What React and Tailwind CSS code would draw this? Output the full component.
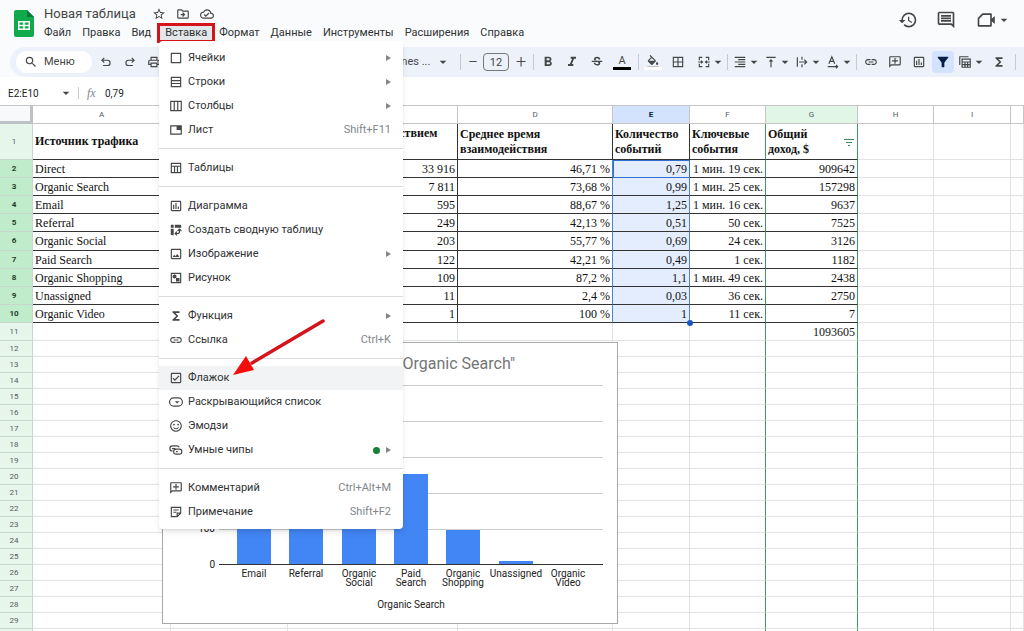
import React from 'react';
import {
  MdArrowDropDown,
  MdBorderAll,
  MdFilterAlt,
  MdFormatAlignRight,
  MdFormatBold,
  MdFormatColorFill,
  MdFormatItalic,
  MdFunctions,
  MdHistory,
  MdLink,
  MdOutlineAddComment,
  MdOutlineCloudDone,
  MdOutlineComment,
  MdOutlineDriveFileMove,
  MdOutlineInsertChart,
  MdOutlineLocalPrintshop,
  MdOutlinePhoto,
  MdOutlinePivotTableChart,
  MdOutlineCheckBox,
  MdOutlineSentimentSatisfied,
  MdSearch,
  MdStarBorder,
  MdStrikethroughS,
  MdVerticalAlignTop,
} from 'react-icons/md';

// Small stroke icon on a 24px grid
const Glyph = ({ children, className = 'size-3.5', ...rest }) => (
  <svg viewBox="0 0 24 24" className={className} fill="none" stroke="currentColor" strokeWidth="2" {...rest}>
    {children}
  </svg>
);

const UndoIcon = () => (
  <Glyph>
    <path d="M9 5 5 9l4 4M5 9h9.500a4.500 4.500 0 0 1 0 9H7" />
  </Glyph>
);

const RedoIcon = () => (
  <Glyph>
    <path d="m15 5 4 4-4 4M19 9H9.500a4.500 4.500 0 0 0 0 9H17" />
  </Glyph>
);

const MergeIcon = () => (
  <Glyph>
    <path d="M4 9V4h5M4 15v5h5M20 9V4h-5M20 15v5h-5M2 12h7M22 12h-7M7 9.500l2.500 2.500L7 14.500M17 9.500 14.500 12l2.500 2.500" />
  </Glyph>
);

const WrapIcon = () => (
  <Glyph>
    <path d="M4 4v16M12 3v5M12 16v5M7 12h13M16 8l4 4-4 4" />
  </Glyph>
);

const RotateIcon = () => (
  <Glyph>
    <path d="m5 15 5-12 5 12M7 11h6M3 20h17M17 17l3 3-3 3" />
  </Glyph>
);

const FilterViewIcon = () => (
  <Glyph>
    <path d="M3 17V3h15M7 7h14v14H7zM7 12h14M7 16.500h14M12 12v9M16.500 12v9" />
  </Glyph>
);

const VideoIcon = () => (
  <Glyph className="size-5">
    <path d="M8 5h10v14H3v-9z" strokeLinejoin="round" />
    <path d="m18 12 4-4v8z" fill="currentColor" strokeWidth="1" />
  </Glyph>
);

const CellsIcon = () => (
  <Glyph>
    <path d="M4 4h16v16H4z" />
  </Glyph>
);

const RowsIcon = () => (
  <Glyph>
    <path d="M4 4h16v16H4zM4 9.500h16M4 14.500h16" />
  </Glyph>
);

const ColumnsIcon = () => (
  <Glyph>
    <path d="M3 4h18v16H3zM9 4v16M15 4v16" />
  </Glyph>
);

const SheetIcon = () => (
  <Glyph>
    <path d="M3 5h18v14H3z" />
    <path d="M14 6h6v5h-6z" fill="currentColor" />
  </Glyph>
);

const TableIcon = () => (
  <Glyph>
    <path d="M4 4h16v16H4zM4 9h16M9.500 9v11M14.500 9v11" />
  </Glyph>
);

const DrawingIcon = () => (
  <Glyph>
    <path d="M4 4h16v16H4z" />
    <circle cx="9.500" cy="9.500" r="2.500" fill="currentColor" />
    <path d="M13 13h4v4h-4z" fill="currentColor" />
  </Glyph>
);

const DropdownIcon = () => (
  <Glyph>
    <rect x="1" y="5" width="22" height="14" rx="7" />
    <path d="M10 10.500h8L14 14.500z" fill="currentColor" stroke="none" />
  </Glyph>
);

const ChipsIcon = () => (
  <Glyph>
    <path d="M6 14a4.500 4.500 0 0 1 0-9h8a4 4 0 0 1 3.500 2.500M5 9.500h6" />
    <rect x="8" y="10.500" width="14" height="8.500" rx="4.200" />
    <path d="M12 14.800h3" />
  </Glyph>
);

const NoteIcon = () => (
  <Glyph>
    <path d="M20 14V4H4v16h10zM14 20v-6h6M7.500 8.500h9M7.500 12.500h5" />
  </Glyph>
);

const CommentPlusIcon = () => (
  <MdOutlineAddComment className="size-3.5 -scale-x-100" />
);

const SheetsLogo = () => (
  <svg viewBox="0 0 20 27" className="h-[27px] w-5 shrink-0">
    <path d="M2 0h11l7 7v18a2 2 0 0 1-2 2H2a2 2 0 0 1-2-2V2a2 2 0 0 1 2-2z" fill="#12a84c" />
    <path d="m13 0 7 7h-7z" fill="#0b7a35" />
    <path d="M4 11h12v9H4zM5.500 12.500v2.300h3.700v-2.300zM10.800 12.500v2.300h3.700v-2.300zM5.500 16.300v2.300h3.700v-2.300zM10.800 16.300v2.300h3.700v-2.300z" fill="#fff" fillRule="evenodd" />
  </svg>
);

const MENUS = ['Файл', 'Правка', 'Вид', 'Вставка', 'Формат', 'Данные', 'Инструменты', 'Расширения', 'Справка'];

const INSERT_MENU = [
  [
    { icon: <CellsIcon />, label: 'Ячейки', submenu: true },
    { icon: <RowsIcon />, label: 'Строки', submenu: true },
    { icon: <ColumnsIcon />, label: 'Столбцы', submenu: true },
    { icon: <SheetIcon />, label: 'Лист', shortcut: 'Shift+F11' },
  ],
  [{ icon: <TableIcon />, label: 'Таблицы' }],
  [
    { icon: <MdOutlineInsertChart className="size-3.5" />, label: 'Диаграмма' },
    { icon: <MdOutlinePivotTableChart className="size-3.5" />, label: 'Создать сводную таблицу' },
    { icon: <MdOutlinePhoto className="size-3.5" />, label: 'Изображение', submenu: true },
    { icon: <DrawingIcon />, label: 'Рисунок' },
  ],
  [
    { icon: <MdFunctions className="size-3.5" />, label: 'Функция', submenu: true },
    { icon: <MdLink className="size-3.5" />, label: 'Ссылка', shortcut: 'Ctrl+K' },
  ],
  [
    { icon: <MdOutlineCheckBox className="size-3.5" />, label: 'Флажок', active: true },
    { icon: <DropdownIcon />, label: 'Раскрывающийся список' },
    { icon: <MdOutlineSentimentSatisfied className="size-3.5" />, label: 'Эмодзи' },
    { icon: <ChipsIcon />, label: 'Умные чипы', submenu: true, isNew: true },
  ],
  [
    { icon: <CommentPlusIcon />, label: 'Комментарий', shortcut: 'Ctrl+Alt+M' },
    { icon: <NoteIcon />, label: 'Примечание', shortcut: 'Shift+F2' },
  ],
];

const COLUMNS = ['A', 'B', 'C', 'D', 'E', 'F', 'G', 'H', 'I', ''];

const HEADINGS = [
  'Источник трафика',
  '',
  'Сеансы с взаимодействием',
  'Среднее время взаимодействия',
  'Количество событий',
  'Ключевые события',
  'Общий доход, $',
];

const DATA = [
  ['Direct', '', '33 916', '46,71 %', '0,79', '1 мин. 19 сек.', '909642'],
  ['Organic Search', '', '7 811', '73,68 %', '0,99', '1 мин. 25 сек.', '157298'],
  ['Email', '', '595', '88,67 %', '1,25', '1 мин. 16 сек.', '9637'],
  ['Referral', '', '249', '42,13 %', '0,51', '50 сек.', '7525'],
  ['Organic Social', '', '203', '55,77 %', '0,69', '24 сек.', '3126'],
  ['Paid Search', '', '122', '42,21 %', '0,49', '1 сек.', '1182'],
  ['Organic Shopping', '', '109', '87,2 %', '1,1', '1 мин. 49 сек.', '2438'],
  ['Unassigned', '', '11', '2,4 %', '0,03', '36 сек.', '2750'],
  ['Organic Video', '', '1', '100 %', '1', '11 сек.', '7'],
  ['', '', '', '', '', '', '1093605'],
];

const EMPTY_ROWS = Array.from({ length: 18 }, (_, i) => i + 12);

const Header = () => (
  <header className="flex items-start bg-[#f9fbfd] pb-[3px] pl-3.5">
    <div className="pt-2.5">
      <SheetsLogo />
    </div>
    <div className="ml-2.5 flex-1 pt-1.5">
      <div className="flex h-4 items-center text-[#444746]">
        <h1 className="text-[13px] leading-4">Новая таблица</h1>
        <button aria-label="Пометить" className="ml-4"><MdStarBorder className="size-3.5" /></button>
        <button aria-label="Переместить" className="ml-2.5"><MdOutlineDriveFileMove className="size-3.5" /></button>
        <button aria-label="Состояние документа" className="ml-2.5"><MdOutlineCloudDone className="size-3.5" /></button>
      </div>
      <nav className="flex h-[22px] items-center text-[11px] text-[#303234]">
        {MENUS.map(name => (
          <button
            key={name}
            className={name === 'Вставка'
              ? 'mr-1 -ml-[5px] h-5 border-3 border-[#d3141b] bg-[#e4e7ea] px-[5px] leading-3'
              : 'mr-[11px] h-5 whitespace-nowrap'}
          >
            {name}
          </button>
        ))}
      </nav>
    </div>
    <div className="flex items-center pt-2.5 pr-3 text-[#444746]">
      <button aria-label="История изменений" className="mr-[18px]"><MdHistory className="size-5" /></button>
      <button aria-label="Комментарии" className="mr-5"><MdOutlineComment className="size-5" /></button>
      <button aria-label="Видеовстреча" className="flex items-center">
        <VideoIcon />
        <MdArrowDropDown className="size-4" />
      </button>
    </div>
  </header>
);

const Tool = ({ label, arrow, className = 'w-6', children }) => (
  <button aria-label={label} className={`flex h-[22px] shrink-0 items-center justify-center ${className}`}>
    {children}
    {arrow && <MdArrowDropDown className="-ml-px size-4 shrink-0" />}
  </button>
);

const Divider = ({ className = '' }) => <div className={`h-4 w-px shrink-0 bg-[#c7cbd1] ${className}`} />;

const Toolbar = () => (
  <div className="bg-[#f9fbfd] pl-2.5">
    <div className="flex h-[30px] items-center overflow-hidden rounded-l-full bg-[#edf2fa] text-[#444746]">
      <label className="mr-0.5 ml-1.5 flex h-[22px] w-[76px] shrink-0 items-center rounded-full bg-white pl-2">
        <MdSearch className="mr-1.5 size-3.5 shrink-0" />
        <input placeholder="Меню" className="w-11 text-[11px] outline-none placeholder:text-[#444746]" />
      </label>
      <Tool label="Отменить"><UndoIcon /></Tool>
      <Tool label="Повторить"><RedoIcon /></Tool>
      <Tool label="Печать"><MdOutlineLocalPrintshop className="size-3.5" /></Tool>
      <Tool label="Шрифт" arrow className="ml-[216px] w-[78px] pr-1.5 text-[11px]"><span className="mr-1.5 ml-1">Times ...</span></Tool>
      <Divider />
      <Tool label="Уменьшить" className="ml-0.5 w-5 text-lg font-light">−</Tool>
      <input aria-label="Размер шрифта" defaultValue="12" className="h-[18px] w-[26px] shrink-0 rounded-sm border border-[#747775] text-center text-[11px]" />
      <Tool label="Увеличить" className="w-6 text-lg font-light">+</Tool>
      <Divider className="mr-0.5" />
      <Tool label="Полужирный"><MdFormatBold className="size-4" /></Tool>
      <Tool label="Курсив"><MdFormatItalic className="size-4" /></Tool>
      <Tool label="Зачеркнутый" className="w-[26px]"><MdStrikethroughS className="size-3.5" /></Tool>
      <Tool label="Цвет текста" className="w-6 flex-col">
        <span className="text-[11px] leading-3">A</span>
        <span className="h-[3px] w-[18px] bg-black" />
      </Tool>
      <Divider className="mr-0.5 ml-1" />
      <Tool label="Цвет заливки" className="w-6 flex-col">
        <MdFormatColorFill className="-mb-0.5 size-3.5" />
        <span className="h-[3px] w-[18px] bg-white" />
      </Tool>
      <Tool label="Границы" className="w-[26px]"><MdBorderAll className="size-3.5" /></Tool>
      <Tool label="Объединить" arrow className="w-9 pl-1"><MergeIcon /></Tool>
      <Divider className="mr-1" />
      <Tool label="Выравнивание" arrow className="w-[31px]"><MdFormatAlignRight className="size-3.5" /></Tool>
      <Tool label="По вертикали" arrow className="w-[31px]"><MdVerticalAlignTop className="size-3.5" /></Tool>
      <Tool label="Перенос" arrow className="w-[31px]"><WrapIcon /></Tool>
      <Tool label="Поворот" arrow className="w-[31px]"><RotateIcon /></Tool>
      <Divider className="mr-0.5" />
      <Tool label="Ссылка"><MdLink className="size-3.5" /></Tool>
      <Tool label="Комментарий"><CommentPlusIcon /></Tool>
      <Tool label="Диаграмма"><MdOutlineInsertChart className="size-3.5" /></Tool>
      <Tool label="Фильтр" className="mx-px w-[22px] rounded-sm bg-[#d3e3fd] text-[#041e49]"><MdFilterAlt className="size-4" /></Tool>
      <Tool label="Фильтры" arrow className="w-[34px]"><FilterViewIcon /></Tool>
      <Tool label="Функции" className="w-5"><MdFunctions className="size-3.5" /></Tool>
      <Divider className="ml-1.5" />
    </div>
  </div>
);

const FormulaBar = () => (
  <div className="flex h-7 items-center pt-1 text-[10px] text-[#202124]">
    <input aria-label="Диапазон" defaultValue="E2:E10" className="ml-2 w-[50px]" />
    <MdArrowDropDown className="size-4 text-[#444746]" />
    <div className="ml-1 h-3 w-px bg-[#c7cbd1]" />
    <span className="ml-2 w-[18px] font-['Liberation_Serif',serif] text-xs text-[#80868b] italic">fx</span>
    <input aria-label="Формула" defaultValue="0,79" className="flex-1 outline-none" />
  </div>
);

const cellBorder = (col, row) => {
  const bottom = col < 7 && row <= 10 ? 'border-b-[#333]' : 'border-b-[#e1e3e1]';
  let right = 'border-r-[#e1e3e1]';
  if (col === 5 || col === 6) {
    right = 'border-r-[#3f9a60]';
  } else if (row <= 10 && (col === 3 || col === 4)) {
    right = row === 1 ? 'border-r-[#333]' : 'border-r-[#4d84cf]';
  } else if (row <= 10 && col === 2) {
    right = 'border-r-[#333]';
  }
  return `border-r border-b ${bottom} ${right}`;
};

const rowHeaderColor = row => {
  if (row > 1 && row <= 10) return 'bg-[#c0eccb] font-bold text-[#1f3d2a]';
  return 'bg-[#e6f6ea] font-normal text-[#575b5f]';
};

const RowHeader = ({ row }) => (
  <th
    scope="row"
    className={`border-r border-b border-[#c9d6cd] pr-1 text-center font-[Roboto,sans-serif] text-[8px] leading-3 ${rowHeaderColor(row)}`}
  >
    {row}
  </th>
);

const Sheet = () => (
  <table className="w-full table-fixed border-separate border-spacing-0">
    <colgroup>
      <col className="w-[33px]" />
      <col className="w-[138px]" />
      <col className="w-[117px]" />
      <col className="w-[170px]" />
      <col className="w-[155px]" />
      <col className="w-[77px]" />
      <col className="w-[76px]" />
      <col className="w-[92px]" />
      <col className="w-[76px]" />
      <col className="w-[77px]" />
      <col />
    </colgroup>
    <thead>
      <tr className="h-[19px] text-[8px] text-[#575b5f]">
        <td className="border-t border-r-3 border-b-3 border-t-[#c4c7c5] border-r-[#bdc1c6] border-b-[#bdc1c6] bg-[#f8f9fa]" />
        {COLUMNS.map((name, i) => (
          <th
            key={i}
            scope="col"
            className={`border-y border-r border-[#c4c7c5] ${
              name === 'E' ? 'bg-[#d3e3fd] font-bold text-[#041e49]' : name === 'G' ? 'bg-[#e2f6e7] font-normal' : 'font-normal'
            }`}
          >
            {name}
          </th>
        ))}
      </tr>
    </thead>
    <tbody className="font-['Liberation_Serif',serif] text-xs text-[#111]">
      <tr className="h-9">
        <RowHeader row={1} />
        {COLUMNS.map((name, col) => (
          <td key={col} className={`px-0.5 leading-[15px] font-bold ${col === 2 ? 'pt-0.5 align-top whitespace-nowrap' : ''} ${cellBorder(col, 1)}`}>
            {name === 'G' ? (
              <div className="flex items-center">
                <span className="w-14">{HEADINGS[col]}</span>
                <button aria-label="Фильтр столбца" className="ml-5">
                  <svg viewBox="0 0 10 8" className="h-2 w-2.5" stroke="#3c8758">
                    <path d="M0 1.500h10M2 4.500h6M4 7.500h2" />
                  </svg>
                </button>
              </div>
            ) : HEADINGS[col]}
          </td>
        ))}
      </tr>
      {DATA.map((cells, i) => {
        const row = i + 2;
        return (
          <tr key={row} className={row === 6 ? 'h-[19px]' : 'h-[18px]'}>
            <RowHeader row={row} />
            {COLUMNS.map((_, col) => (
              <td
                key={col}
                className={`px-0.5 leading-4 whitespace-nowrap ${col > 0 ? 'text-right' : ''} ${cellBorder(col, row)} ${
                  col === 4 && row <= 10 ? 'bg-[#e4edfd]' : ''
                } ${col === 4 && row === 2 ? 'outline-1 -outline-offset-1 outline-[#2f6fd0]' : ''} ${
                  col === 4 && row === 10 ? 'relative' : ''
                }`}
              >
                {cells[col]}
                {col === 4 && row === 10 && (
                  <span className="absolute -right-1 -bottom-1 size-1.5 rounded-full bg-[#1a56c4]" />
                )}
              </td>
            ))}
          </tr>
        );
      })}
      {EMPTY_ROWS.map(row => (
        <tr key={row} className="h-4">
          <RowHeader row={row} />
          {COLUMNS.map((_, col) => (
            <td key={col} className={cellBorder(col, row)} />
          ))}
        </tr>
      ))}
      <tr className="h-4">
        <td className="border-r border-[#c9d6cd] bg-[#e6f6ea]" />
        {COLUMNS.map((_, col) => (
          <td key={col} className={cellBorder(col, 30)} />
        ))}
      </tr>
    </tbody>
  </table>
);

const BARS = [
  { lines: ['Email'], height: 60 },
  { lines: ['Referral'], height: 60 },
  { lines: ['Organic', 'Social'], height: 60 },
  { lines: ['Paid', 'Search'], height: 90 },
  { lines: ['Organic', 'Shopping'], height: 34 },
  { lines: ['Unassigned'], height: 3 },
  { lines: ['Organic', 'Video'], height: 0 },
];

const Chart = () => (
  <svg viewBox="0 0 456 282" className="block h-[282px] w-[456px]">
    <rect x="0.500" y="0.500" width="455" height="281" fill="#fff" stroke="#a5a8ab" />
    <text x="353" y="27" textAnchor="end" fontSize="16" fill="#757575">"Organic Search"</text>
    {[43, 79, 115, 151, 187].map(y => (
      <line key={y} x1="57" x2="441" y1={y + 0.5} y2={y + 0.5} stroke="#ccc" />
    ))}
    {BARS.map((bar, i) => {
      const x = 75 + Math.round(i * 52.3);
      return (
        <g key={i}>
          <rect x={x} y={222 - bar.height} width="34" height={bar.height} fill="#4285f4" />
          {bar.lines.map((line, n) => (
            <text key={line} x={x + 17} y={235 + n * 9} textAnchor="middle" fontSize="10" fill="#222">{line}</text>
          ))}
        </g>
      );
    })}
    <line x1="57" x2="441" y1="222.500" y2="222.500" stroke="#333" />
    <text x="53" y="190" textAnchor="end" fontSize="10" fill="#222">100</text>
    <text x="53" y="226" textAnchor="end" fontSize="10" fill="#222">0</text>
    <text x="249" y="266" textAnchor="middle" fontSize="10" fill="#222">Organic Search</text>
  </svg>
);

const InsertMenu = () => (
  <div role="menu" className="w-[244px] rounded-sm bg-white py-[5px] text-[11px] text-[#303234] shadow-md">
    {INSERT_MENU.map((group, g) => (
      <div key={g} role="group" className={g > 0 ? 'mt-1.5 border-t border-[#dadce0] pt-[7px]' : ''}>
        {group.map(item => (
          <button
            key={item.label}
            role="menuitem"
            className={`flex h-6 w-full items-center pr-3 pl-2.5 ${item.active ? 'bg-[#f1f3f4]' : ''}`}
          >
            <span className="w-[19px] text-[#444746]">{item.icon}</span>
            <span>{item.label}</span>
            <span className="ml-auto flex items-center text-[#80868b]">
              {item.shortcut}
              {item.isNew && <span className="mr-1.5 size-[7px] rounded-full bg-[#188038]" />}
              {item.submenu && (
                <svg viewBox="0 0 5 6" className="h-1.5 w-[5px]" fill="#80868b">
                  <path d="M0 0l5 3-5 3z" />
                </svg>
              )}
            </span>
          </button>
        ))}
      </div>
    ))}
  </div>
);

const Pointer = () => (
  <svg viewBox="0 0 96 60" className="h-[60px] w-24">
    <path d="M91 3 20 45" stroke="#d3141b" strokeWidth="3.500" strokeLinecap="round" />
    <path d="M1 57 14 38l8 14z" fill="#f50d0d" />
  </svg>
);

export default function App() {
  return (
    <div className="relative h-screen overflow-hidden bg-white font-[Roboto,sans-serif]">
      <Header />
      <Toolbar />
      <FormulaBar />
      <Sheet />
      <div className="absolute top-[342px] left-[162px]">
        <Chart />
      </div>
      <div className="absolute top-[41px] left-[159px]">
        <InsertMenu />
      </div>
      <div className="pointer-events-none absolute top-[318px] left-[232px]">
        <Pointer />
      </div>
    </div>
  );
}
